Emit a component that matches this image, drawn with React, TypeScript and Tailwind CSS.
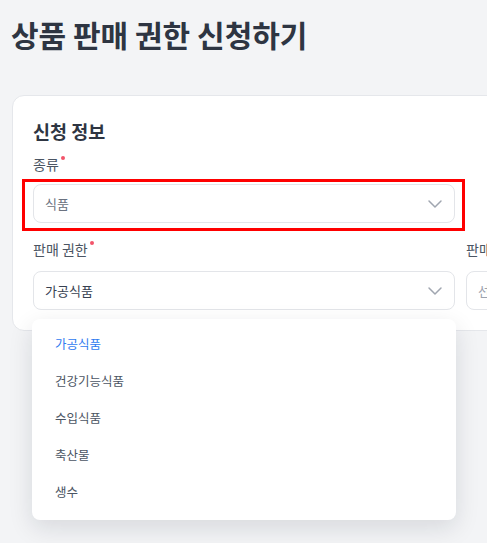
import { ChevronDown } from "lucide-react";

const options = ["가공식품", "건강기능식품", "수입식품", "축산물", "생수"];

function Label({ text }: { text: string }) {
  return (
    <div className="flex h-5 items-center text-[14px] text-[#4b5563]">
      <span>{text}</span>
      <span className="mb-3 ml-[2px] h-[4px] w-[4px] rounded-full bg-[#f2546a]" />
    </div>
  );
}

function Select({ value, muted }: { value: string; muted?: boolean }) {
  return (
    <div className="flex h-[39px] items-center justify-between rounded-lg border border-[#e3e5e9] bg-white pl-[11px] pr-[7px]">
      <span className={`text-[13px] ${muted ? "text-[#6b7280]" : "text-[#374151]"}`}>{value}</span>
      <ChevronDown size={24} strokeWidth={1.5} className="text-[#a0a6b0]" />
    </div>
  );
}

export default function App() {
  return (
    <div
      className="relative h-[543px] w-[487px] overflow-hidden bg-[#f3f4f6]"
      style={{ fontFamily: '"Noto Sans CJK KR", "Noto Sans", sans-serif' }}
    >
      {/* Page title */}
      <h1 className="pl-[11px] pt-[14px] text-[30px] font-bold leading-[40px] text-[#2e3542]">
        상품 판매 권한 신청하기
      </h1>

      {/* Form card */}
      <div className="ml-[12px] mt-[41px] w-[700px] rounded-xl border border-[#e5e7eb] bg-white px-[20px] pb-[20px] pt-[23px]">
        <h2 className="text-[18.5px] font-bold leading-[24px] text-[#2e3542]">신청 정보</h2>

        <div className="mt-[11px] w-[422px]">
          <Label text="종류" />
          <div className="relative mt-[10px]">
            <Select value="식품" muted />
            {/* highlight annotation */}
            <div className="pointer-events-none absolute -bottom-[8px] -left-[11px] -right-[10px] -top-[5px] border-[3px] border-[#ff0000]" />
          </div>
        </div>

        <div className="mt-[16px] grid grid-cols-[422px_422px] gap-x-[11px]">
          <div>
            <Label text="판매 권한" />
            <div className="mt-[12px]">
              <Select value="가공식품" />
            </div>
          </div>
          <div>
            <Label text="판매 지역" />
            <div className="mt-[12px] flex h-[39px] items-center rounded-lg border border-[#e3e5e9] bg-white pl-[11px]">
              <span className="text-[13px] text-[#9ca3af]">선택하세요</span>
            </div>
          </div>
        </div>
      </div>

      {/* Open dropdown menu */}
      <div className="absolute left-[32px] top-[319px] w-[424px] rounded-lg bg-white pb-[9px] pt-[7px] shadow-[0_8px_24px_rgba(15,23,42,0.12)]">
        {options.map((o, i) => (
          <div
            key={o}
            className={`flex h-[37px] items-center pl-[23px] text-[12.5px] ${
              i === 0 ? "text-[#2f7bf0]" : "text-[#4b5563]"
            }`}
          >
            {o}
          </div>
        ))}
      </div>
    </div>
  );
}
